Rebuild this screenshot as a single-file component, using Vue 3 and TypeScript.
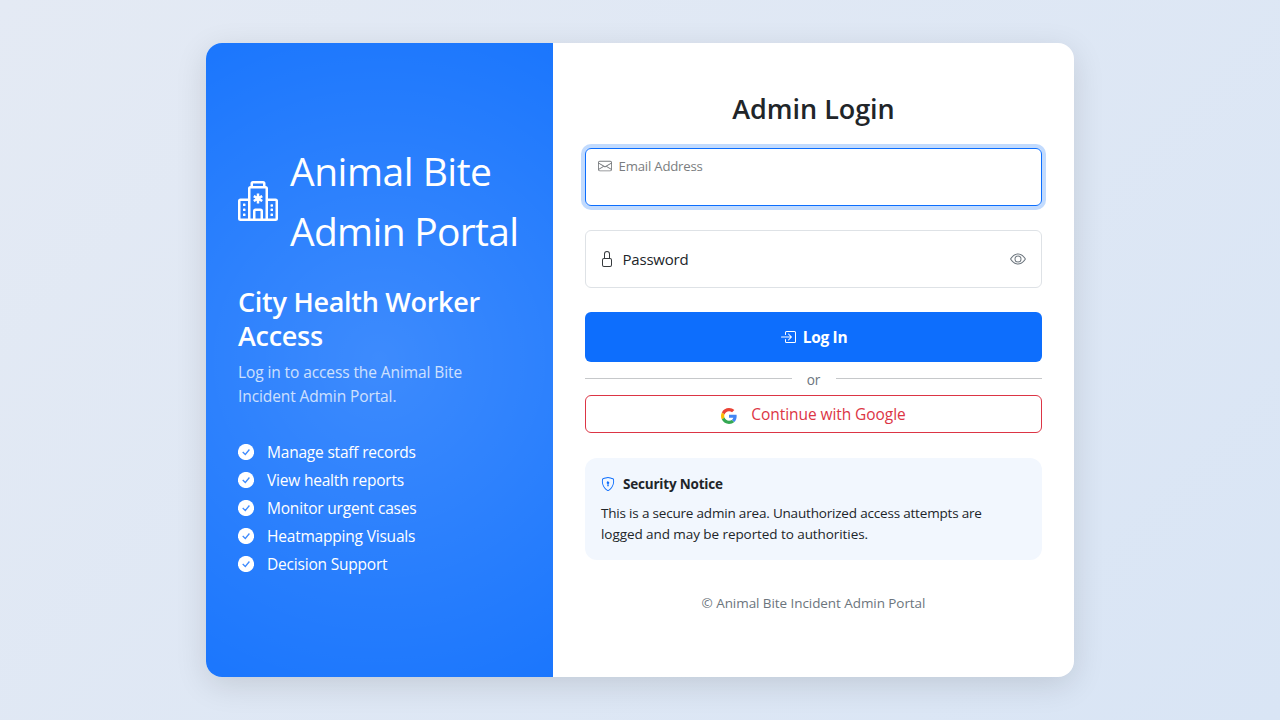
<script setup lang="ts">
import { ref } from 'vue'

const email = ref<string>('')
const features: string[] = [
  'Manage staff records',
  'View health reports',
  'Monitor urgent cases',
  'Heatmapping Visuals',
  'Decision Support',
]
</script>

<template>
  <div class="page">
    <main class="card">
      <section class="intro">
        <div class="brand">
          <svg class="brand-icon" viewBox="0 0 16 16" fill="currentColor">
            <path d="M8.5 5.034v1.1l.953-.55.5.867L9 7l.953.55-.5.866-.953-.55v1.1h-1v-1.1l-.953.55-.5-.866L7 7l-.953-.55.5-.866.953.55v-1.1zM13.25 9.25a.25.25 0 0 0-.25.25v.5c0 .138.112.25.25.25h.5a.25.25 0 0 0 .25-.25v-.5a.25.25 0 0 0-.25-.25zM13 11.25a.25.25 0 0 1 .25-.25h.5a.25.25 0 0 1 .25.25v.5a.25.25 0 0 1-.25.25h-.5a.25.25 0 0 1-.25-.25zm.25 1.75a.25.25 0 0 0-.25.25v.5c0 .138.112.25.25.25h.5a.25.25 0 0 0 .25-.25v-.5a.25.25 0 0 0-.25-.25zm-11-4a.25.25 0 0 0-.25.25v.5c0 .138.112.25.25.25h.5A.25.25 0 0 0 3 9.75v-.5A.25.25 0 0 0 2.750 9zm0 2a.25.25 0 0 0-.25.25v.5c0 .138.112.25.25.25h.5a.25.25 0 0 0 .25-.25v-.5a.25.25 0 0 0-.25-.25zM2 13.25a.25.25 0 0 1 .25-.25h.5a.25.25 0 0 1 .25.25v.5a.25.25 0 0 1-.25.25h-.5a.25.25 0 0 1-.25-.25z" />
            <path d="M5 1a1 1 0 0 1 1-1h4a1 1 0 0 1 1 1v1a1 1 0 0 1 1 1v4h3a1 1 0 0 1 1 1v7a1 1 0 0 1-1 1H1a1 1 0 0 1-1-1V8a1 1 0 0 1 1-1h3V3a1 1 0 0 1 1-1zm2 14h2v-3H7zm3 0h1V3H5v12h1v-3a1 1 0 0 1 1-1h2a1 1 0 0 1 1 1zm0-14H6v1h4zm2 7v7h3V8zm-8 7V8H1v7z" />
          </svg>
          <div class="brand-name"><span class="line b1">Animal Bite</span><span class="line b2">Admin Portal</span></div>
        </div>
        <h2 class="intro-title"><span class="line">City Health Worker</span><span class="line">Access</span></h2>
        <p class="intro-text"><span class="line">Log in to access the Animal Bite</span><span class="line">Incident Admin Portal.</span></p>
        <ul class="features">
          <li v-for="item in features" :key="item">
            <svg viewBox="0 0 16 16" fill="currentColor">
              <circle cx="8" cy="8" r="8.100" />
              <path class="tick" d="M4.700 8 7.300 10.500 11.400 5.500" />
            </svg>
            <span>{{ item }}</span>
          </li>
        </ul>
      </section>

      <section class="panel">
        <h1 class="title">Admin Login</h1>
        <form @submit.prevent>
          <div class="field focused">
            <label class="email-label" for="email">
              <svg viewBox="0 0 16 16" fill="currentColor">
                <path d="M0 4a2 2 0 0 1 2-2h12a2 2 0 0 1 2 2v8a2 2 0 0 1-2 2H2a2 2 0 0 1-2-2zm2-1a1 1 0 0 0-1 1v.217l7 4.200 7-4.200V4a1 1 0 0 0-1-1zm13 2.383-4.708 2.825L15 11.105zm-.034 6.876-5.640-3.471L8 9.583l-1.326-.795-5.640 3.470A1 1 0 0 0 2 13h12a1 1 0 0 0 .966-.741M1 11.105l4.708-2.897L1 5.383z" />
              </svg>
              <span>Email Address</span>
            </label>
            <input id="email" v-model="email" type="email" />
          </div>
          <div class="field password">
            <svg class="lock" viewBox="0 0 16 16" fill="currentColor">
              <path d="M8 1a2 2 0 0 1 2 2v4H6V3a2 2 0 0 1 2-2m3 6V3a3 3 0 0 0-6 0v4a2 2 0 0 0-2 2v5a2 2 0 0 0 2 2h6a2 2 0 0 0 2-2V9a2 2 0 0 0-2-2M5 8h6a1 1 0 0 1 1 1v5a1 1 0 0 1-1 1H5a1 1 0 0 1-1-1V9a1 1 0 0 1 1-1" />
            </svg>
            <span class="password-label">Password</span>
            <svg class="eye" viewBox="0 0 16 16" fill="currentColor">
              <path d="M16 8s-3-5.500-8-5.500S0 8 0 8s3 5.500 8 5.500S16 8 16 8M1.173 8a13 13 0 0 1 1.660-2.043C4.120 4.668 5.880 3.500 8 3.500s3.879 1.168 5.168 2.457A13 13 0 0 1 14.828 8q-.086.130-.195.288c-.335.480-.830 1.120-1.465 1.755C11.879 11.332 10.119 12.500 8 12.500s-3.879-1.168-5.168-2.457A13 13 0 0 1 1.172 8z" />
              <path d="M8 5.500a2.500 2.500 0 1 0 0 5 2.500 2.500 0 0 0 0-5M4.500 8a3.500 3.500 0 1 1 7 0 3.500 3.500 0 0 1-7 0" />
            </svg>
          </div>
          <button class="login" type="submit">
            <svg viewBox="0 0 16 16" fill="currentColor">
              <path fill-rule="evenodd" d="M6 3.500a.5.5 0 0 1 .5-.5h8a.5.5 0 0 1 .5.5v9a.5.5 0 0 1-.5.5h-8a.5.5 0 0 1-.5-.5v-2a.5.5 0 0 0-1 0v2A1.500 1.500 0 0 0 6.500 14h8a1.500 1.500 0 0 0 1.500-1.500v-9A1.500 1.500 0 0 0 14.500 2h-8A1.500 1.500 0 0 0 5 3.500v2a.5.5 0 0 0 1 0z" />
              <path fill-rule="evenodd" d="M11.854 8.354a.5.5 0 0 0 0-.708l-3-3a.5.5 0 1 0-.708.708L10.293 7.500H1.500a.5.5 0 0 0 0 1h8.793l-2.147 2.146a.5.5 0 0 0 .708.708z" />
            </svg>
            <span>Log In</span>
          </button>
        </form>
        <div class="divider"><i></i><span>or</span><i></i></div>
        <button class="google" type="button">
          <svg viewBox="0 0 48 48">
            <path fill="#EA4335" d="M24 9.500c3.540 0 6.710 1.220 9.210 3.600l6.850-6.850C35.900 2.380 30.470 0 24 0 14.620 0 6.510 5.380 2.560 13.220l7.980 6.190C12.430 13.720 17.740 9.500 24 9.500z" />
            <path fill="#4285F4" d="M46.980 24.550c0-1.570-.150-3.090-.380-4.550H24v9.020h12.940c-.580 2.960-2.260 5.480-4.780 7.180l7.730 6c4.510-4.180 7.090-10.360 7.090-17.650z" />
            <path fill="#FBBC05" d="M10.530 28.590c-.480-1.450-.760-2.990-.760-4.590s.270-3.140.760-4.590l-7.980-6.190C.920 16.460 0 20.120 0 24c0 3.880.920 7.540 2.560 10.780l7.970-6.190z" />
            <path fill="#34A853" d="M24 48c6.480 0 11.930-2.130 15.890-5.810l-7.730-6c-2.150 1.450-4.920 2.300-8.160 2.300-6.260 0-11.570-4.220-13.470-9.910l-7.980 6.190C6.510 42.620 14.620 48 24 48z" />
          </svg>
          <span>Continue with Google</span>
        </button>
        <aside class="notice">
          <div class="notice-head">
            <svg viewBox="0 0 16 16" fill="currentColor">
              <path d="M5.338 1.590a61 61 0 0 0-2.837.856.480.480 0 0 0-.328.390c-.554 4.157.726 7.190 2.253 9.188a10.700 10.700 0 0 0 2.287 2.233c.346.244.652.420.893.533q.180.085.293.118a1 1 0 0 0 .101.025 1 1 0 0 0 .100-.025q.114-.034.294-.118c.240-.113.547-.290.893-.533a10.700 10.700 0 0 0 2.287-2.233c1.527-1.997 2.807-5.031 2.253-9.188a.480.480 0 0 0-.328-.390c-.651-.213-1.750-.560-2.837-.855C9.552 1.290 8.531 1.067 8 1.067c-.530 0-1.552.223-2.662.524zM5.072.560C6.157.265 7.310 0 8 0s1.843.265 2.928.560c1.110.300 2.229.655 2.887.870a1.540 1.540 0 0 1 1.044 1.262c.596 4.477-.787 7.795-2.465 9.990a11.800 11.800 0 0 1-2.517 2.453 7 7 0 0 1-1.048.625c-.280.132-.581.240-.829.240s-.548-.108-.829-.240a7 7 0 0 1-1.048-.625 11.800 11.800 0 0 1-2.517-2.453C1.928 10.487.545 7.169 1.141 2.692A1.540 1.540 0 0 1 2.185 1.430 63 63 0 0 1 5.072.560" />
              <path d="M9.500 6.500a1.500 1.500 0 0 1-1 1.415l.385 1.990a.5.5 0 0 1-.491.595h-.788a.5.5 0 0 1-.490-.595l.384-1.990a1.500 1.500 0 1 1 2-1.415" />
            </svg>
            <strong>Security Notice</strong>
          </div>
          <p><span class="line n1">This is a secure admin area. Unauthorized access attempts are</span><span class="line n2">logged and may be reported to authorities.</span></p>
        </aside>
        <footer>© Animal Bite Incident Admin Portal</footer>
      </section>
    </main>
  </div>
</template>

<style>
body {
  margin: 0;
  overflow: hidden;
}
</style>

<style scoped>
.page {
  box-sizing: border-box;
  width: 100vw;
  height: 100vh;
  display: flex;
  align-items: center;
  justify-content: center;
  background: linear-gradient(135deg, #e4eaf4 0%, #d9e5f5 100%);
  font-family: "Open Sans", "Noto Sans", sans-serif;
  font-size: 15.5px;
  color: #212529;
}
.page * {
  box-sizing: border-box;
}
svg {
  display: block;
  flex: none;
}
h1, h2, p, ul {
  margin: 0;
}
.line {
  display: block;
  white-space: nowrap;
}
.card {
  width: 868px;
  height: 634px;
  display: flex;
  overflow: hidden;
  border-radius: 16px;
  background: #fff;
  box-shadow: 0 8px 32px rgba(0, 0, 0, 0.12);
}
.intro {
  width: 347px;
  padding: 98px 32px 0;
  color: #fff;
  background: radial-gradient(circle 506px at center, rgba(255, 255, 255, 0.2), transparent), #0d6efd;
}
.brand {
  display: flex;
  align-items: center;
  gap: 12px;
  height: 120px;
  margin-bottom: 24px;
}
.brand-icon {
  width: 40px;
  height: 40px;
}
.brand-name {
  font-size: 39px;
  line-height: 60px;
}
.b1 {
  letter-spacing: -0.5px;
}
.b2 {
  letter-spacing: -0.7px;
}
.intro-title {
  font-size: 27px;
  line-height: 34px;
  font-weight: 600;
  letter-spacing: -0.28px;
  margin-bottom: 7px;
}
.intro-text {
  line-height: 24px;
  letter-spacing: -0.1px;
  opacity: 0.75;
}
.features {
  list-style: none;
  padding: 0;
  margin-top: 30px;
}
.features li {
  display: flex;
  align-items: center;
  gap: 13px;
  height: 28px;
  letter-spacing: -0.2px;
}
.features svg {
  width: 16px;
  height: 16px;
}
.tick {
  fill: none;
  stroke: #3f8bfd;
  stroke-width: 1.3;
}
.panel {
  flex: 1;
  padding: 49px 32px 0;
}
.title {
  font-size: 27px;
  line-height: 34px;
  font-weight: 600;
  letter-spacing: -0.05px;
  text-align: center;
  margin-bottom: 22px;
}
.field {
  height: 58px;
  border: 1px solid #dee2e6;
  border-radius: 6px;
  margin-bottom: 24px;
}
.focused {
  border-color: #0d6efd;
  box-shadow: 0 0 0 4px rgba(13, 110, 253, 0.25);
  padding: 7px 12px;
}
.email-label {
  display: flex;
  align-items: center;
  gap: 6.5px;
  height: 20px;
  font-size: 13.2px;
  letter-spacing: -0.2px;
  color: #7a7d80;
}
.email-label svg {
  width: 14px;
  height: 14px;
}
.focused input {
  display: block;
  width: 100%;
  height: 20px;
  padding: 0;
  border: 0;
  outline: 0;
  background: transparent;
}
.password {
  display: flex;
  align-items: center;
  padding: 0 15px 0 12.5px;
}
.lock {
  width: 16px;
  height: 16px;
  margin-right: 8px;
  opacity: 0.9;
}
.password-label {
  flex: 1;
  font-size: 15px;
  letter-spacing: -0.2px;
}
.eye {
  width: 16px;
  height: 16px;
  color: #6c757d;
}
button {
  display: flex;
  align-items: center;
  justify-content: center;
  width: 100%;
  padding: 0;
  border-radius: 6px;
  font: inherit;
}
.login {
  height: 50px;
  gap: 7px;
  border: 0;
  background: #0d6efd;
  color: #fff;
  font-weight: 700;
  letter-spacing: -0.3px;
}
.login svg {
  width: 16px;
  height: 16px;
}
.divider {
  display: flex;
  align-items: center;
  height: 33px;
  font-size: 13.6px;
  color: #6c757d;
}
.divider i {
  flex: 1;
  height: 1px;
  background: #c6c8ca;
}
.divider span {
  width: 44px;
  padding-top: 2px;
  text-align: center;
}
.google {
  height: 38px;
  gap: 14px;
  border: 1px solid #dc3545;
  background: #fff;
  color: #dc3545;
  letter-spacing: -0.07px;
}
.google svg {
  width: 16px;
  height: 16px;
  margin-top: 3px;
}
.notice {
  margin-top: 25px;
  height: 102px;
  padding: 15px 16px 16px;
  border-radius: 12px;
  background: #f2f7fe;
  font-size: 13.5px;
}
.notice-head {
  display: flex;
  align-items: center;
  gap: 8px;
  height: 21px;
  margin-bottom: 9px;
}
.notice-head svg {
  width: 14px;
  height: 14px;
  color: #0d6efd;
}
.notice-head strong {
  letter-spacing: -0.2px;
}
.notice p {
  line-height: 21px;
}
.n1 {
  letter-spacing: -0.19px;
}
.n2 {
  letter-spacing: -0.07px;
}
footer {
  margin-top: 33px;
  line-height: 21px;
  text-align: center;
  font-size: 13.5px;
  letter-spacing: -0.07px;
  color: #6c757d;
}
</style>
